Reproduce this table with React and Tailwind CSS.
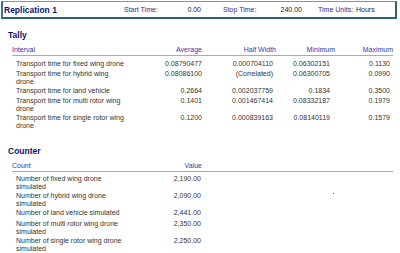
export default function App() {
  const tally = [
    ["Transport time for fixed wing drone", "0.08790477", "0.000704110", "0.06302151", "0.1130"],
    ["Transport time for hybrid wing drone", "0.08086100", "(Correlated)", "0.06300705", "0.0990"],
    ["Transport time for land vehicle", "0.2664", "0.002037759", "0.1834", "0.3500"],
    ["Transport time for multi rotor wing drone", "0.1401", "0.001467414", "0.08332187", "0.1979"],
    ["Transport time for single rotor wing drone", "0.1200", "0.000839163", "0.08140119", "0.1579"],
  ];
  const counter = [
    ["Number of fixed wing drone simulated", "2,190.00"],
    ["Number of hybrid wing drone simulated", "2,090.00"],
    ["Number of land vehicle simulated", "2,441.00"],
    ["Number of multi rotor wing drone simulated", "2,350.00"],
    ["Number of single rotor wing drone simulated", "2,250.00"],
  ];
  return (
    <div
      className="relative w-[400px] h-[253px] bg-white overflow-hidden text-[7px] leading-[8px] text-[#333]"
      style={{ fontFamily: '"Liberation Sans", Arial, sans-serif' }}
    >
      {/* header bar */}
      <div className="ml-[1px] mt-[1px] w-[396px] h-[18px] flex items-center border-t border-l-2 border-t-[#6f9ea2] border-l-[#3d6f9a] border-r-2 border-b-2 border-r-[#2c6468] border-b-[#2c6468]">
        <div className="w-[121px] pl-[1px] text-[8.5px] font-bold text-[#10106e]">Replication 1</div>
        <div className="w-[50px] text-[#2c2c96]">Start Time:</div>
        <div className="w-[27px] text-right text-[#222]">0.00</div>
        <div className="ml-[22px] w-[45px] text-[#2c2c96]">Stop Time:</div>
        <div className="w-[34px] text-right text-[#222]">240.00</div>
        <div className="ml-[16px] w-[38px] text-[#2c2c96]">Time Units:</div>
        <div className="text-[#222]">Hours</div>
      </div>

      {/* Tally */}
      <div className="mt-[11px] pl-[8px] h-[10px] leading-[10px] text-[8.5px] font-bold text-[#10106e]">Tally</div>
      <div className="mt-[6px] ml-[12px] w-[381px]">
        <div className="flex h-[8px] items-end text-[#3535a8] border-b-[1.5px] border-[#d49a9a] pb-[1px] box-content">
          <div className="w-[114px]">Interval</div>
          <div className="w-[76px] text-right">Average</div>
          <div className="w-[74px] text-right">Half Width</div>
          <div className="w-[59px] text-right">Minimum</div>
          <div className="w-[58px] text-right">Maximum</div>
        </div>
        <div className="mt-[3px]">
          {tally.map((r, i) => (
            <div key={i} className="flex min-h-[10px] py-[0.5px]">
              <div className="w-[114px] pl-[4px] pr-[1px]">{r[0]}</div>
              <div className="w-[76px] text-right">{r[1]}</div>
              <div className="w-[74px] text-right pr-[3px]">{r[2]}</div>
              <div className="w-[59px] text-right pr-[5px]">{r[3]}</div>
              <div className="w-[58px] text-right pr-[3px]">{r[4]}</div>
            </div>
          ))}
        </div>
      </div>

      {/* Counter */}
      <div className="mt-[16px] pl-[8px] h-[10px] leading-[10px] text-[8.5px] font-bold text-[#10106e]">Counter</div>
      <div className="mt-[6px] ml-[12px] w-[381px]">
        <div className="flex h-[8px] items-end text-[#3535a8] border-b-[1.5px] border-[#d49a9a] pb-[1px] box-content">
          <div className="w-[114px]">Count</div>
          <div className="w-[76px] text-right">Value</div>
        </div>
        <div className="mt-[2px]">
          {counter.map((r, i) => (
            <div key={i} className="flex min-h-[11px] py-[0.5px]">
              <div className="w-[114px] pl-[4px] pr-[4px]">{r[0]}</div>
              <div className="w-[76px] text-right pr-[1px]">{r[1]}</div>
            </div>
          ))}
        </div>
      </div>

      <div className="absolute left-[333px] top-[193px] w-[1px] h-[1px] bg-[#e02020]" />
    </div>
  );
}
